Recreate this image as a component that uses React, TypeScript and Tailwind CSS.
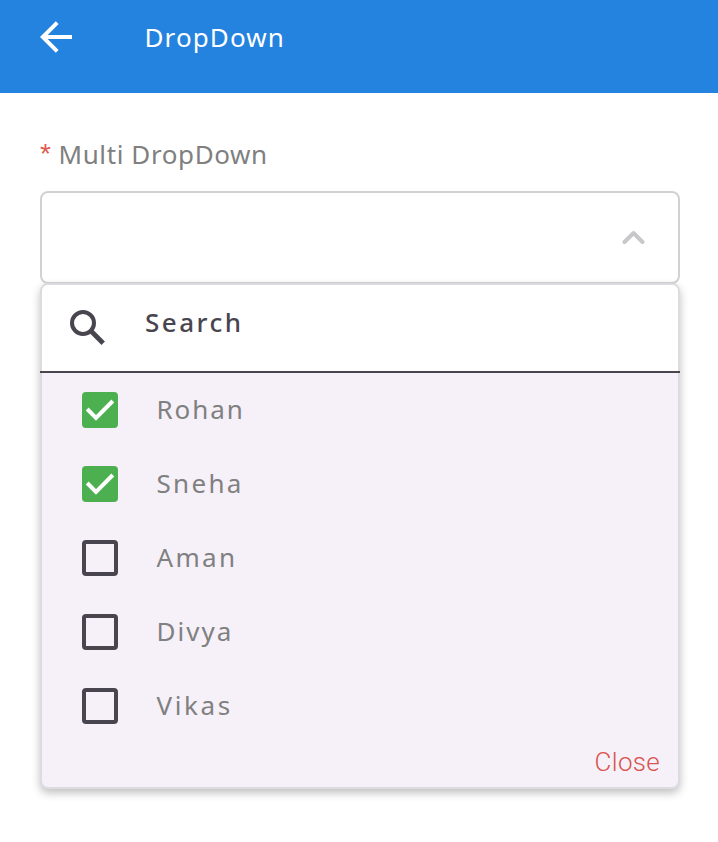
import { useState } from "react";

const people = [
  { name: "Rohan", spacing: "tracking-[1.9px]" },
  { name: "Sneha", spacing: "tracking-[2.3px]" },
  { name: "Aman", spacing: "tracking-[2.3px]" },
  { name: "Divya", spacing: "tracking-[2px]" },
  { name: "Vikas", spacing: "tracking-[2.6px]" },
];

function Checkbox({ checked }: { checked: boolean }) {
  return checked ? (
    <span className="flex size-9 items-center justify-center rounded-[4px] bg-[#4caf50]">
      <svg className="size-9" viewBox="0 0 36 36" fill="none" stroke="#fff" strokeWidth="4">
        <path d="M5.2 17 L14 25.8 L30.8 9" />
      </svg>
    </span>
  ) : (
    <span className="size-9 rounded-[4px] border-4 border-[#49454f]" />
  );
}

export default function App() {
  const [selected, setSelected] = useState(["Rohan", "Sneha"]);
  const toggle = (name: string) =>
    setSelected((s) => (s.includes(name) ? s.filter((n) => n !== name) : [...s, name]));

  return (
    <div className="flex h-[842px] w-[718px] flex-col overflow-hidden bg-white font-['Noto_Sans',sans-serif] text-[26px] leading-9 font-[450]">
      <header className="flex h-[93px] shrink-0 bg-[#2583e0] pl-10 text-white">
        <svg className="mt-[21px] h-8 w-8" viewBox="0 0 32 32" fill="none" stroke="currentColor" strokeWidth="4">
          <path d="M32 16 H3 M17.2 1.6 L2.8 16 L17.2 30.4" />
        </svg>
        <h1 className="mt-[19px] ml-[72.5px] font-[450] tracking-[1.1px]">DropDown</h1>
      </header>

      <main className="px-10 pt-[43px] pr-[38px]">
        <label className="flex h-9 text-[#808080]">
          <span className="w-[18.5px] font-['Liberation_Sans',sans-serif] text-[28px] text-[#e15a52]">*</span>
          <span className="tracking-[0.6px]">Multi DropDown</span>
        </label>

        <div className="mt-[19px] flex h-[93px] items-center justify-end rounded-lg border-2 border-[#d2d2d4] pr-8 pb-0.5">
          <svg className="h-4 w-6" viewBox="0 0 24 16" fill="none" stroke="#c8c8ca" strokeWidth="4" strokeLinecap="round" strokeLinejoin="round">
            <path d="M2.5 13 L11.5 4 L20.5 13" />
          </svg>
        </div>

        <section className="-mt-px h-[506px] rounded-lg border-2 border-[#dcdbdf] bg-[#f6f1f9] shadow-[0_4px_8px_rgba(0,0,0,0.25)]">
          <div className="flex h-[86px] rounded-t-md bg-white pl-7 text-[#49454f]">
            <svg className="mt-[24px] size-9" viewBox="0 0 36 36" fill="none" stroke="currentColor" strokeWidth="4">
              <circle cx="13" cy="14" r="11" />
              <path d="M21 22 L33.2 34.2" strokeWidth="4.8" />
            </svg>
            <span className="mt-[19px] ml-[39px] font-medium tracking-[2.5px]">Search</span>
          </div>
          <div className="-mx-0.5 h-0.5 bg-[#49454f]" />

          <ul>
            {people.map(({ name, spacing }) => (
              <li key={name} onClick={() => toggle(name)} className="flex h-[74px] items-center gap-[38.5px] pl-10">
                <Checkbox checked={selected.includes(name)} />
                <span className={`pb-0.5 text-[#808080] ${spacing}`}>{name}</span>
              </li>
            ))}
          </ul>

          <div className="mt-px flex justify-end pr-[18px]">
            <button className="font-['Roboto',sans-serif] text-[26px] font-light tracking-[0.3px] text-[#d9534f]">Close</button>
          </div>
        </section>
      </main>
    </div>
  );
}
